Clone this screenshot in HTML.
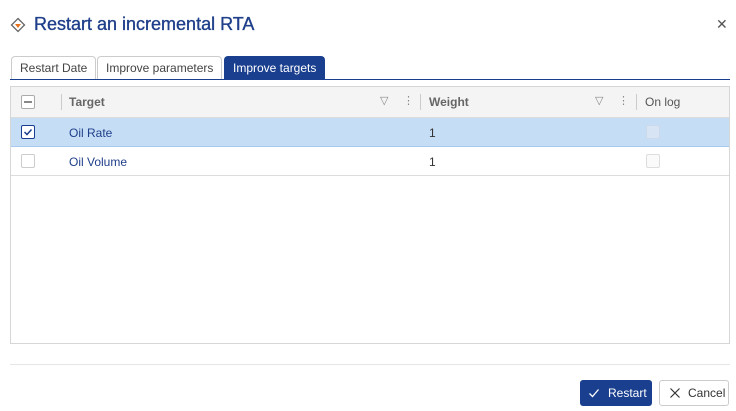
<!DOCTYPE html><html><head><style>
*{box-sizing:border-box;margin:0;padding:0}
body{width:736px;height:411px;background:#fff;font-family:"Liberation Sans",sans-serif;position:relative;overflow:hidden;color:#333}
.a{position:absolute}
.title{left:34px;top:14px;font-size:18px;color:#1f3f8a;-webkit-text-stroke:0.35px #1f3f8a;letter-spacing:0}
.tab{top:56px;height:24px;border:1px solid #ccc;border-bottom:none;border-radius:4px 4px 0 0;font-size:12px;line-height:22px;padding:0 8px;color:#444;background:#fff}
.grid{left:10px;top:86px;width:720px;height:258px;border:1px solid #d6d6d6}
.hdr{left:0;top:0;width:718px;height:31px;background:#f4f4f4;border-bottom:1px solid #dcdcdc}
.hd{font-size:12px;font-weight:bold;color:#666;top:8px}
.sep{width:1px;height:16px;background:#ccc;top:7px}
.cb{width:14px;height:14px;border:1px solid #bbb;border-radius:2px;background:#fff}
.row{left:0;width:718px;height:29px;border-bottom:1px solid #dcdcdc;font-size:12px}
.ic{font-size:11px;color:#888;top:7px}
</style></head><body>
<svg class="a" style="left:10px;top:17px" width="16" height="16" viewBox="0 0 16 16"><path d="M8 1.5L14.5 8 8 14.5 1.5 8z" fill="#fff" stroke="#666" stroke-width="1.3"/><path d="M5 7h6L8 11z" fill="#e8711c"/></svg>
<div class="a title">Restart an incremental RTA</div>
<div class="a" style="left:716px;top:16px;font-size:14px;color:#555">✕</div>
<div class="a tab" style="left:11px">Restart Date</div>
<div class="a tab" style="left:97px">Improve parameters</div>
<div class="a tab" style="left:224px;background:#1a3f8f;border-color:#1a3f8f;color:#fff;font-weight:500">Improve targets</div>
<div class="a" style="left:10px;top:79px;width:720px;height:1px;background:#1a3f8f"></div>
<div class="a grid">
 <div class="a hdr">
  <div class="a cb" style="left:10px;top:8px;border-color:#aaa"><div style="margin:5px 2px;height:2px;background:#888"></div></div>
  <div class="a sep" style="left:50px"></div>
  <div class="a hd" style="left:58px">Target</div>
  <div class="a ic" style="left:369px">▽</div><div class="a ic" style="left:392px">⋮</div>
  <div class="a sep" style="left:409px"></div>
  <div class="a hd" style="left:418px">Weight</div>
  <div class="a ic" style="left:584px">▽</div><div class="a ic" style="left:607px">⋮</div>
  <div class="a sep" style="left:625px"></div>
  <div class="a hd" style="left:634px;font-weight:normal;color:#555">On log</div>
 </div>
 <div class="a row" style="top:31px;background:#c5ddf5;border-bottom-color:#a9c8ee">
  <div class="a cb" style="left:10px;top:7px;border-color:#1a3f8f;border-width:1.5px"><svg width="12" height="12" class="a" style="left:0;top:0"><path d="M2.5 6l2.5 2.5 4.5-5" stroke="#1a3f8f" stroke-width="1.5" fill="none"/></svg></div>
  <div class="a" style="left:58px;top:8px;color:#1f3f8a">Oil Rate</div>
  <div class="a" style="left:418px;top:8px">1</div>
  <div class="a cb" style="left:635px;top:7px;background:#d6e4f3;border-color:#cdd9e8"></div>
 </div>
 <div class="a row" style="top:60px">
  <div class="a cb" style="left:10px;top:7px;border-color:#ccc"></div>
  <div class="a" style="left:58px;top:8px;color:#1f3f8a">Oil Volume</div>
  <div class="a" style="left:418px;top:8px">1</div>
  <div class="a cb" style="left:635px;top:7px;border-color:#ddd;background:#fafafa"></div>
 </div>
</div>
<div class="a" style="left:10px;top:364px;width:720px;height:1px;background:#e6e6e6"></div>
<div class="a" style="left:580px;top:380px;width:72px;height:26px;background:#1a3f8f;border-radius:3px;color:#fff;font-size:12px;line-height:26px;padding-left:28px">Restart<svg class="a" style="left:8px;top:7px" width="12" height="12"><path d="M1.5 6.5l3 3 6-7" stroke="#fff" stroke-width="1.3" fill="none"/></svg></div>
<div class="a" style="left:659px;top:380px;width:70px;height:26px;border:1px solid #ccc;border-radius:3px;color:#333;font-size:12px;line-height:24px;padding-left:28px">Cancel<svg class="a" style="left:9px;top:6px" width="12" height="12"><path d="M1.5 1.5l9 9M10.5 1.5l-9 9" stroke="#333" stroke-width="1.2"/></svg></div>
</body></html>
